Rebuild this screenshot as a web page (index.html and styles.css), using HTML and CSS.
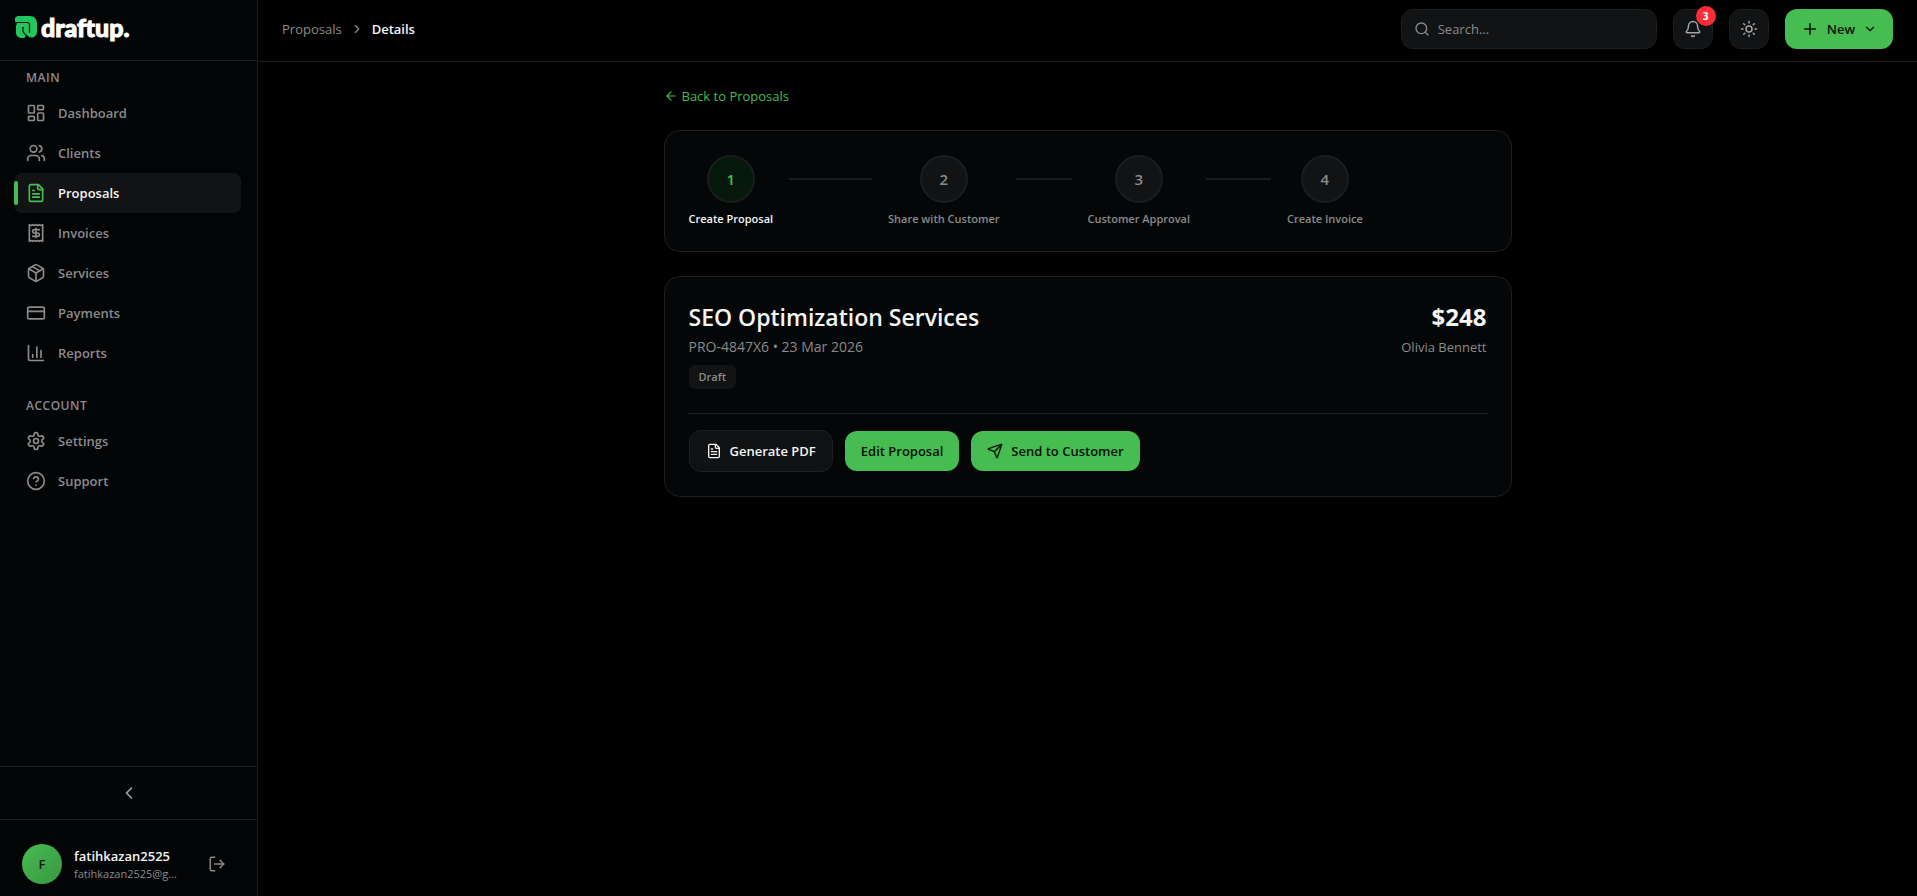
FILE: index.html
```html
<!DOCTYPE html>
<html lang="en">
<head>
<meta charset="utf-8">
<title>Proposal details – draftup</title>
<link rel="stylesheet" href="styles.css">
</head>
<body>
<div class="app">
  <aside class="sidebar">
    <a class="logo" href="#" aria-label="draftup">
      <svg class="logo-mark" viewBox="0 0 22 22" aria-hidden="true"><path d="M3 0h12a7 7 0 0 1 7 7v9a5.500 5.500 0 0 1-9.500 3.800L11 18.300V19a3 3 0 0 1-3 3H6a5 5 0 0 1-5-5v-6.500a4 4 0 0 1 1-2.700A4 4 0 0 1 0 4a3.500 3.500 0 0 1 3-4z" fill="#22c55e"/><path d="M1.500 6.500H12a2.500 2.500 0 0 1 2.500 2.500v7.500M8.500 11.500H7.500M8 11.500v4l3 4" fill="none" stroke="#06150b" stroke-width="1.200" stroke-linecap="round"/></svg>
      <span class="logo-text">draftup.</span>
    </a>
    <nav class="nav">
      <h2 class="nav-title">MAIN</h2>
      <a class="nav-item" href="#"><svg class="icon i20" viewBox="0 0 24 24"><rect width="7" height="9" x="3" y="3" rx="1"/><rect width="7" height="5" x="14" y="3" rx="1"/><rect width="7" height="9" x="14" y="12" rx="1"/><rect width="7" height="5" x="3" y="16" rx="1"/></svg>Dashboard</a>
      <a class="nav-item" href="#"><svg class="icon i20" viewBox="0 0 24 24"><path d="M16 21v-2a4 4 0 0 0-4-4H6a4 4 0 0 0-4 4v2"/><circle cx="9" cy="7" r="4"/><path d="M22 21v-2a4 4 0 0 0-3-3.870"/><path d="M16 3.130a4 4 0 0 1 0 7.750"/></svg>Clients</a>
      <a class="nav-item active" href="#" aria-current="page"><svg class="icon i20" viewBox="0 0 24 24"><path d="M15 2H6a2 2 0 0 0-2 2v16a2 2 0 0 0 2 2h12a2 2 0 0 0 2-2V7Z"/><path d="M14 2v4a2 2 0 0 0 2 2h4"/><path d="M10 9H8"/><path d="M16 13H8"/><path d="M16 17H8"/></svg>Proposals</a>
      <a class="nav-item" href="#"><svg class="icon i20" viewBox="0 0 24 24"><path d="M4 2v20l2-1 2 1 2-1 2 1 2-1 2 1 2-1 2 1V2l-2 1-2-1-2 1-2-1-2 1-2-1-2 1Z"/><path d="M16 8h-6a2 2 0 1 0 0 4h4a2 2 0 1 1 0 4H8"/><path d="M12 17.500v-11"/></svg>Invoices</a>
      <a class="nav-item" href="#"><svg class="icon i20" viewBox="0 0 24 24"><path d="m7.500 4.270 9 5.150"/><path d="M21 8a2 2 0 0 0-1-1.730l-7-4a2 2 0 0 0-2 0l-7 4A2 2 0 0 0 3 8v8a2 2 0 0 0 1 1.730l7 4a2 2 0 0 0 2 0l7-4A2 2 0 0 0 21 16Z"/><path d="m3.300 7 8.700 5 8.700-5"/><path d="M12 22V12"/></svg>Services</a>
      <a class="nav-item" href="#"><svg class="icon i20" viewBox="0 0 24 24"><rect width="20" height="14" x="2" y="5" rx="2"/><path d="M2 10h20"/></svg>Payments</a>
      <a class="nav-item" href="#"><svg class="icon i20" viewBox="0 0 24 24"><path d="M3 3v16a2 2 0 0 0 2 2h16"/><path d="M18 17V9"/><path d="M13 17V5"/><path d="M8 17v-3"/></svg>Reports</a>
      <h2 class="nav-title nav-title-next">ACCOUNT</h2>
      <a class="nav-item" href="#"><svg class="icon i20" viewBox="0 0 24 24"><path d="M12.220 2h-.44a2 2 0 0 0-2 2v.18a2 2 0 0 1-1 1.730l-.43.25a2 2 0 0 1-2 0l-.15-.08a2 2 0 0 0-2.730.73l-.22.38a2 2 0 0 0 .73 2.730l.15.1a2 2 0 0 1 1 1.720v.51a2 2 0 0 1-1 1.740l-.15.09a2 2 0 0 0-.73 2.730l.22.38a2 2 0 0 0 2.730.73l.15-.08a2 2 0 0 1 2 0l.43.25a2 2 0 0 1 1 1.730V20a2 2 0 0 0 2 2h.44a2 2 0 0 0 2-2v-.18a2 2 0 0 1 1-1.730l.43-.25a2 2 0 0 1 2 0l.15.08a2 2 0 0 0 2.730-.73l.22-.39a2 2 0 0 0-.73-2.730l-.15-.08a2 2 0 0 1-1-1.740v-.5a2 2 0 0 1 1-1.740l.15-.09a2 2 0 0 0 .73-2.730l-.22-.38a2 2 0 0 0-2.730-.73l-.15.08a2 2 0 0 1-2 0l-.43-.25a2 2 0 0 1-1-1.730V4a2 2 0 0 0-2-2z"/><circle cx="12" cy="12" r="3"/></svg>Settings</a>
      <a class="nav-item" href="#"><svg class="icon i20" viewBox="0 0 24 24"><circle cx="12" cy="12" r="10"/><path d="M9.090 9a3 3 0 0 1 5.830 1c0 2-3 3-3 3"/><path d="M12 17h.01"/></svg>Support</a>
    </nav>
    <button class="collapse" type="button" aria-label="Collapse sidebar"><svg class="icon i20" viewBox="0 0 24 24"><path d="m15 18-6-6 6-6"/></svg></button>
    <div class="user">
      <span class="avatar">F</span>
      <div class="user-info">
        <div class="user-name">fatihkazan2525</div>
        <div class="user-mail">fatihkazan2525@g...</div>
      </div>
      <button class="logout" type="button" aria-label="Log out"><svg class="icon i18" viewBox="0 0 24 24"><path d="M9 21H5a2 2 0 0 1-2-2V5a2 2 0 0 1 2-2h4"/><path d="m16 17 5-5-5-5"/><path d="M21 12H9"/></svg></button>
    </div>
  </aside>

  <div class="page">
    <header class="topbar">
      <nav class="crumbs" aria-label="Breadcrumb">
        <a href="#">Proposals</a>
        <svg class="icon i14" viewBox="0 0 24 24"><path d="m9 18 6-6-6-6"/></svg>
        <span class="crumb-current">Details</span>
      </nav>
      <div class="tools">
        <label class="search">
          <svg class="icon i16" viewBox="0 0 24 24"><circle cx="11" cy="11" r="8"/><path d="m21 21-4.300-4.300"/></svg>
          <input type="search" placeholder="Search..." aria-label="Search">
        </label>
        <button class="tool" type="button" aria-label="Notifications">
          <svg class="icon i18" viewBox="0 0 24 24"><path d="M10.268 21a2 2 0 0 0 3.464 0"/><path d="M3.262 15.326A1 1 0 0 0 4 17h16a1 1 0 0 0 .74-1.673C19.410 13.956 18 12.499 18 8A6 6 0 0 0 6 8c0 4.499-1.411 5.956-2.738 7.326"/></svg>
          <span class="badge">3</span>
        </button>
        <button class="tool" type="button" aria-label="Toggle theme"><svg class="icon i18" viewBox="0 0 24 24"><circle cx="12" cy="12" r="4"/><path d="M12 2v2M12 20v2M4.930 4.930l1.410 1.410M17.660 17.660l1.410 1.410M2 12h2M20 12h2M6.340 17.660l-1.410 1.410M19.070 4.930l-1.410 1.410"/></svg></button>
        <button class="btn primary" type="button">
          <svg class="icon i18" viewBox="0 0 24 24"><path d="M5 12h14M12 5v14"/></svg>New<svg class="icon i14" viewBox="0 0 24 24"><path d="m6 9 6 6 6-6"/></svg>
        </button>
      </div>
    </header>

    <main class="content">
      <a class="back" href="#"><svg class="icon i14" viewBox="0 0 24 24"><path d="m12 19-7-7 7-7M19 12H5"/></svg>Back to Proposals</a>

      <ol class="card steps">
        <li class="step current"><div class="step-body"><span class="dot">1</span><span class="step-label">Create Proposal</span></div><span class="line"></span></li>
        <li class="step"><div class="step-body"><span class="dot">2</span><span class="step-label">Share with Customer</span></div><span class="line"></span></li>
        <li class="step"><div class="step-body"><span class="dot">3</span><span class="step-label">Customer Approval</span></div><span class="line"></span></li>
        <li class="step"><div class="step-body"><span class="dot">4</span><span class="step-label">Create Invoice</span></div></li>
      </ol>

      <section class="card">
        <div class="summary">
          <div>
            <h1 class="title">SEO Optimization Services</h1>
            <p class="meta">PRO-4847X6 • 23 Mar 2026</p>
            <span class="status">Draft</span>
          </div>
          <div class="total">
            <p class="amount">$248</p>
            <p class="meta">Olivia Bennett</p>
          </div>
        </div>
        <div class="actions">
          <button class="btn secondary" type="button"><svg class="icon i16" viewBox="0 0 24 24"><path d="M15 2H6a2 2 0 0 0-2 2v16a2 2 0 0 0 2 2h12a2 2 0 0 0 2-2V7Z"/><path d="M14 2v4a2 2 0 0 0 2 2h4"/><path d="M10 9H8"/><path d="M16 13H8"/><path d="M16 17H8"/></svg>Generate PDF</button>
          <button class="btn primary" type="button">Edit Proposal</button>
          <button class="btn primary" type="button"><svg class="icon i16" viewBox="0 0 24 24"><path d="M14.536 21.686a.5.5 0 0 0 .937-.024l6.500-19a.496.496 0 0 0-.635-.635l-19 6.500a.5.5 0 0 0-.024.937l7.930 3.180a2 2 0 0 1 1.112 1.110z"/><path d="m21.854 2.147-10.940 10.939"/></svg>Send to Customer</button>
        </div>
      </section>
    </main>
  </div>
</div>
</body>
</html>
```
FILE: styles.css
```css
:root {
  --green: #46bc51;
  --line: #1c1e1f;
  --panel: #111314;
  --muted: #8b8b8b;
  --text: #f5f5f5;
}
* { box-sizing: border-box; }
body {
  margin: 0;
  background: #000;
  color: var(--text);
  font-family: "Segoe UI", "Open Sans", "Noto Sans", sans-serif;
  font-size: 13px;
  line-height: 20px;
}
h1, h2, p, ol { margin: 0; padding: 0; }
a { color: inherit; text-decoration: none; }
button, input { font: inherit; color: inherit; }
button { cursor: pointer; }

.icon {
  flex: none;
  fill: none;
  stroke: currentColor;
  stroke-width: 2;
  stroke-linecap: round;
  stroke-linejoin: round;
}
.i14 { width: 14px; height: 14px; }
.i16 { width: 16px; height: 16px; }
.i18 { width: 18px; height: 18px; }
.i20 { width: 20px; height: 20px; }

.app { display: flex; min-height: 100vh; }

.sidebar {
  display: flex;
  flex-direction: column;
  flex: none;
  width: 258px;
  background: #030406;
  border-right: 1px solid var(--line);
}
.logo {
  display: flex;
  align-items: center;
  gap: 4px;
  height: 61px;
  padding: 0 15px 6px;
  border-bottom: 1px solid var(--line);
}
.logo-mark { width: 22px; height: 22px; }
.logo-text {
  color: #fff;
  font-family: Lato, sans-serif;
  font-size: 25px;
  font-weight: 900;
  line-height: 24px;
  -webkit-text-stroke: 1px #fff;
}
.nav { flex: 1; padding: 8px 16px 0 14px; }
.nav-title {
  padding: 0 12px;
  margin-bottom: 6px;
  color: var(--muted);
  font-size: 12px;
  font-weight: 600;
  line-height: 18px;
  letter-spacing: 0.5px;
}
.nav-title-next { margin-top: 24px; }
.nav-item {
  position: relative;
  display: flex;
  align-items: center;
  gap: 12px;
  height: 40px;
  padding: 0 12px;
  border-radius: 8px;
  color: var(--muted);
  font-weight: 600;
}
.nav-item.active { background: var(--panel); color: var(--text); }
.nav-item.active .icon { color: var(--green); }
.nav-item.active::before {
  content: "";
  position: absolute;
  left: 0;
  top: 8px;
  width: 4px;
  height: 24px;
  border-radius: 2px;
  background: var(--green);
}
.collapse {
  display: flex;
  align-items: center;
  justify-content: center;
  height: 53px;
  padding: 0;
  background: none;
  border: 0;
  border-top: 1px solid var(--line);
  color: #a3a3a3;
}
.user {
  display: flex;
  align-items: center;
  gap: 12px;
  padding: 24px 23px 12px 22px;
  border-top: 1px solid var(--line);
}
.avatar {
  display: flex;
  align-items: center;
  justify-content: center;
  flex: none;
  width: 40px;
  height: 40px;
  border-radius: 50%;
  background: linear-gradient(135deg, #46bc51, #389641);
  color: #06180a;
  font-weight: 600;
}
.user-info { flex: 1; min-width: 0; }
.user-name { font-weight: 600; }
.user-mail { color: var(--muted); font-size: 11px; line-height: 16px; }
.logout {
  display: flex;
  padding: 8px;
  background: none;
  border: 0;
  color: var(--muted);
}

.page { flex: 1; min-width: 0; }
.topbar {
  display: flex;
  align-items: center;
  justify-content: space-between;
  padding: 9px 24px 12px;
  border-bottom: 1px solid var(--line);
}
.crumbs { display: flex; align-items: center; gap: 8px; color: var(--muted); }
.crumb-current { color: var(--text); font-weight: 600; }
.tools { display: flex; gap: 16px; }
.search {
  display: flex;
  align-items: center;
  gap: 8px;
  width: 256px;
  height: 40px;
  padding: 0 12px;
  background: var(--panel);
  border: 1px solid var(--line);
  border-radius: 12px;
  color: var(--muted);
}
.search input {
  flex: 1;
  min-width: 0;
  padding: 0;
  background: none;
  border: 0;
  outline: 0;
}
.search input::placeholder { color: var(--muted); }
.tool {
  position: relative;
  display: flex;
  align-items: center;
  justify-content: center;
  width: 40px;
  height: 40px;
  padding: 0;
  background: var(--panel);
  border: 1px solid var(--line);
  border-radius: 12px;
  color: #a3a3a3;
}
.badge {
  position: absolute;
  top: -4px;
  right: -4px;
  width: 20px;
  height: 20px;
  border-radius: 50%;
  background: #fb2c36;
  color: #fff;
  font-size: 10px;
  font-weight: 700;
}
.btn {
  display: flex;
  align-items: center;
  gap: 8px;
  height: 40px;
  padding: 0 16px;
  border: 0;
  border-radius: 12px;
  font-weight: 600;
}
.primary { background: var(--green); color: #041006; }
.secondary { height: 42px; background: #0f1112; border: 1px solid var(--line); }

.content { max-width: 896px; margin: 0 auto; padding: 24px; }
.back {
  display: flex;
  align-items: center;
  gap: 4px;
  width: fit-content;
  color: var(--green);
}
.card {
  margin-top: 24px;
  padding: 24px;
  background: #040607;
  border: 1px solid var(--line);
  border-radius: 16px;
}
.steps { display: grid; grid-template-columns: repeat(4, 1fr); list-style: none; }
.step { display: flex; }
.step-body { display: flex; flex-direction: column; align-items: center; gap: 8px; }
.dot {
  display: flex;
  align-items: center;
  justify-content: center;
  width: 48px;
  height: 48px;
  background: var(--panel);
  border: 2px solid #1a1c1d;
  border-radius: 50%;
  color: var(--muted);
  font-size: 15px;
  font-weight: 600;
}
.step-label {
  color: var(--muted);
  font-size: 11px;
  font-weight: 600;
  line-height: 16px;
  white-space: nowrap;
}
.current .dot { background: #06180b; color: var(--green); }
.current .step-label { color: var(--text); }
.line { flex: 1; height: 2px; margin: 23px 16px 0; background: #1a1c1d; }

.summary {
  display: flex;
  justify-content: space-between;
  padding-bottom: 24px;
  border-bottom: 1px solid var(--line);
}
.title, .amount { font-size: 23px; font-weight: 600; line-height: 32px; }
.amount { font-size: 24px; font-weight: 700; }
.total { text-align: right; }
.meta { margin-top: 4px; color: var(--muted); font-size: 14px; }
.total .meta { font-size: 13px; }
.status {
  display: block;
  width: fit-content;
  margin-top: 8px;
  padding: 4px 10px;
  background: var(--panel);
  border-radius: 6px;
  color: var(--muted);
  font-size: 11px;
  font-weight: 600;
  line-height: 16px;
}
.actions { display: flex; align-items: center; gap: 12px; padding-top: 16px; }
```
